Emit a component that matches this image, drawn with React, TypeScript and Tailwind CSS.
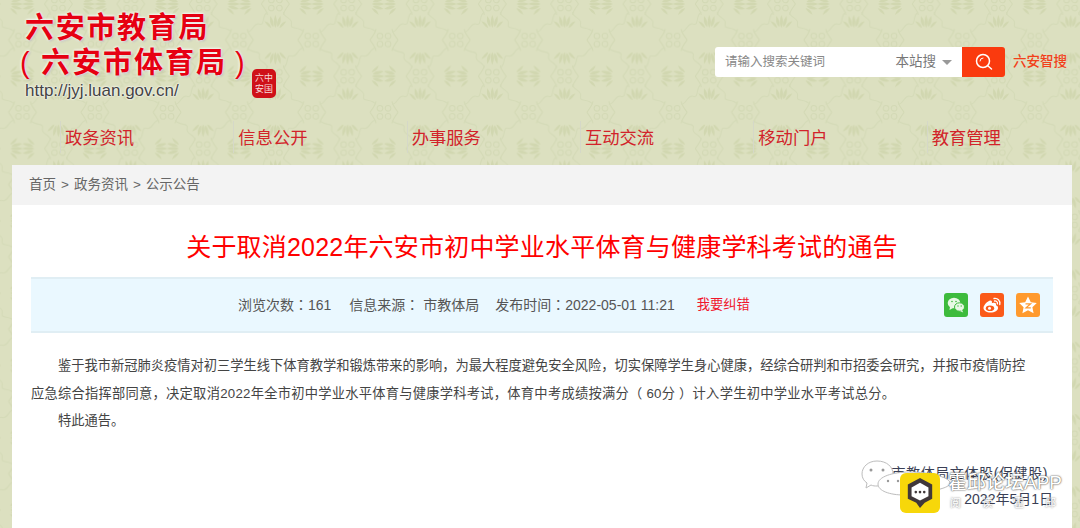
import React from "react";

const navItems = ["政务资讯", "信息公开", "办事服务", "互动交流", "移动门户", "教育管理"];
const cjk = "font-['Liberation_Sans','Noto_Sans_CJK_SC',sans-serif]";

const PagePattern = () => (
  <svg className="absolute inset-0 h-full w-full" aria-hidden="true">
    <defs>
      <g id="fleur" fill="#d1d7b0">
        <path d="M0 0C-2.5-5-1.5-9 0-13C1.5-9 2.5-5 0 0Z" />
        <path d="M-2-1C-5-3-6-7-5-12C-3-9-1-6-2-1ZM2-1C5-3 6-7 5-12C3-9 1-6 2-1Z" />
        <path d="M-4 0C-7-1-9-4-11-7C-7-6-5-4-4 0ZM4 0C7-1 9-4 11-7C7-6 5-4 4 0Z" />
      </g>
      <g id="knot" fill="none" stroke="#d3d9b5" strokeWidth="1.1">
        <circle cx="-4" cy="-4" r="2.8" />
        <circle cx="4" cy="-4" r="2.8" />
        <circle cx="-4" cy="4" r="2.8" />
        <circle cx="4" cy="4" r="2.8" />
        <path d="M-14 0C-11-4-8-8-8-11M14 0C11-4 8-8 8-11M-14 0C-11 4-8 8-8 11M14 0C11 4 8 8 8 11" />
      </g>
      <path id="scroll" d="M8 28C14 28 14 18 20 20C26 22 22 12 28 8" fill="none" stroke="#d4dab7" strokeWidth="1.1" />
      <pattern id="damask" width="72.3" height="72.3" patternUnits="userSpaceOnUse" patternTransform="translate(22.5 4)">
        <use href="#fleur" transform="translate(36 24)" />
        <use href="#fleur" transform="translate(36 48) rotate(180)" />
        <use href="#fleur" transform="translate(12 0) rotate(-90)" />
        <use href="#fleur" transform="translate(60 0) rotate(90)" />
        <use href="#fleur" transform="translate(12 72.3) rotate(-90)" />
        <use href="#fleur" transform="translate(60 72.3) rotate(90)" />
        <use href="#knot" transform="translate(0 36)" />
        <use href="#knot" transform="translate(72.3 36)" />
        <use href="#knot" transform="translate(36 0)" />
        <use href="#knot" transform="translate(36 72.3)" />
        <use href="#scroll" />
        <use href="#scroll" transform="rotate(90 36 36)" />
        <use href="#scroll" transform="rotate(180 36 36)" />
        <use href="#scroll" transform="rotate(270 36 36)" />
      </pattern>
    </defs>
    <rect width="100%" height="100%" fill="url(#damask)" />
  </svg>
);

const Logo = () => (
  <div className="relative h-[112px] w-[300px] pl-[25px] pt-[11px]">
    <div className="text-[29px] leading-[35px] font-bold tracking-[1.7px] text-[#e60012] [text-shadow:0_0_3px_#fff,0_0_3px_#fff,1px_1px_2px_#999]">六安市教育局</div>
    <div className="-ml-[5px] flex whitespace-nowrap text-[29px] leading-[34px] font-bold tracking-[2px] text-[#e60012] [text-shadow:0_0_3px_#fff,0_0_3px_#fff,1px_1px_2px_#999]">
      <span className="w-[21px] font-normal">(</span>
      <span>六安市体育局</span>
      <span className="ml-[8px] font-normal">)</span>
    </div>
    <div className="text-[17px] leading-[21px] text-[#444] [text-shadow:0_0_2px_#fff,0_0_2px_#fff]">http://jyj.luan.gov.cn/</div>
    <div className="absolute left-[252px] top-[69px] flex h-[29px] w-[24px] items-center justify-center rounded-[5px] bg-[#cf1018] text-[9px] leading-[11px] text-[#f7d9d9]">
      <span className="w-[18px] text-center">六中<br />安国</span>
    </div>
  </div>
);

const SearchBar = () => (
  <div className="flex items-start pt-[47px]">
    <div className="flex h-[30px] w-[247px] items-center justify-between rounded-l-[3px] bg-white pl-[10px] pr-[10px] text-[12.5px] text-[#888]">
      <span>请输入搜索关键词</span>
      <span className="flex items-center gap-[6px] text-[13.5px] text-[#777]">
        本站搜
        <span className="mt-[1px] h-0 w-0 border-x-[5.5px] border-t-[5px] border-x-transparent border-t-[#999]" />
      </span>
    </div>
    <div className="flex h-[30px] w-[43px] items-center justify-center rounded-r-[3px] bg-[#fa3a0e]">
      <svg width="18" height="18" viewBox="0 0 18 18" fill="none" stroke="#fff" strokeWidth="1.5" strokeLinecap="round">
        <circle cx="8" cy="8" r="6.5" />
        <path d="M5 8a3 3 0 0 1 3-3" strokeWidth="1" />
        <path d="M13 13l3.5 3" />
      </svg>
    </div>
    <span className="ml-[8px] mt-[7px] text-[13.5px] leading-[16px] font-medium text-[#f2401a]">六安智搜</span>
  </div>
);

const WechatIcon = () => (
  <svg viewBox="0 0 24 24" className="h-[24px] w-[24px]">
    <rect width="24" height="24" rx="3" fill="#3dbb3d" />
    <ellipse cx="10" cy="10" rx="6.3" ry="5.3" fill="#e8f8e4" />
    <path d="M6 13.5L5.5 17L9 15Z" fill="#e8f8e4" />
    <ellipse cx="15.5" cy="14" rx="5" ry="4.2" fill="#e8f8e4" stroke="#3dbb3d" strokeWidth="1" />
    <path d="M18 17l1.2 2.5L16 18Z" fill="#e8f8e4" />
    <circle cx="8" cy="8.5" r=".8" fill="#3dbb3d" />
    <circle cx="12" cy="8.5" r=".8" fill="#3dbb3d" />
    <circle cx="14" cy="13" r=".7" fill="#3dbb3d" />
    <circle cx="17.2" cy="13" r=".7" fill="#3dbb3d" />
  </svg>
);

const WeiboIcon = () => (
  <svg viewBox="0 0 24 24" className="h-[24px] w-[24px]">
    <rect width="24" height="24" rx="3" fill="#fb5a19" />
    <path d="M10.5 19.5C6.5 19.5 3.5 17.6 3.5 15C3.5 12 7.5 8 10.5 7.5C12 7.4 12.3 9 11.8 10.3C14.5 9.3 16.5 9.8 16 12.3C17.5 12.8 18 13.8 18 15C18 17.5 14.8 19.5 10.5 19.5Z" fill="#fff" />
    <ellipse cx="10" cy="15.2" rx="4.2" ry="2.8" fill="#fb5a19" />
    <circle cx="9.5" cy="15.2" r="1.5" fill="#fff" />
    <path d="M14 5.5C17.5 4.8 20.5 7.5 19.8 11.5M14.5 8C16.3 7.7 17.8 9 17.4 10.8" fill="none" stroke="#fff" strokeWidth="1.3" strokeLinecap="round" />
  </svg>
);

const QzoneIcon = () => (
  <svg viewBox="0 0 24 24" className="h-[24px] w-[24px]">
    <rect width="24" height="24" rx="3" fill="#ff9a2e" />
    <path d="M12 3.5L14.8 9.2L20.8 10L16.4 14.2L17.6 20.3L12 17.3L6.4 20.3L7.6 14.2L3.2 10L9.2 9.2Z" fill="#fff" />
    <path d="M9.5 10.8H14.6L10 14.8H14.8" fill="none" stroke="#ff9a2e" strokeWidth="1.2" />
  </svg>
);

// centred full-width colon, the SC face sets it low on the left
const Colon = () => <span className="font-['Noto_Sans_CJK_TC',sans-serif]">：</span>;

// the WeChat article watermark sitting over the bottom right corner
const Watermark = () => (
  <>
    <svg className="absolute left-[860px] top-[458px] h-[48px] w-[92px]" viewBox="0 0 92 48" fill="#fff" stroke="#bdbdbd" strokeWidth="1">
      <path d="M17 3C8 3 2 9 2 16C2 20 4 23 7 25L6 30L11 27C13 28 15 28 17 28C27 28 33 22 33 16C33 9 27 3 17 3Z" />
      <path d="M50 14C32 14 18 19 18 26C18 33 30 37 44 37C48 37 50 37 52 36L58 40L57 35C74 33 90 30 90 25C90 19 68 14 50 14Z" />
      <circle cx="11" cy="12" r="1.5" fill="#999" stroke="none" />
      <circle cx="23" cy="12" r="1.5" fill="#999" stroke="none" />
      <circle cx="28" cy="23" r="1.2" fill="#999" stroke="none" />
      <circle cx="38" cy="23" r="1.2" fill="#999" stroke="none" />
    </svg>
    <div className="absolute left-[900px] top-[473px] flex h-[40px] w-[40px] items-center justify-center rounded-[6px] bg-[#f7d70a]">
      <svg viewBox="0 0 32 36" className="h-[34px] w-[30px]">
        <path d="M16 2L29 9V24L21 28.5L16 34L12 28.5L3 24V9Z" fill="#40383a" />
        <path d="M16 7L25 12V21.5L16 26L7 21.5V12Z" fill="#fff" />
        <circle cx="11.5" cy="17" r="1.4" fill="#40383a" />
        <circle cx="16" cy="17" r="1.4" fill="#40383a" />
        <circle cx="20.5" cy="17" r="1.4" fill="#40383a" />
      </svg>
    </div>
  </>
);

export default function App() {
  return (
    <div className={`relative h-[528px] w-[1080px] overflow-hidden bg-[#dce0c0] ${cjk}`}>
      <PagePattern />
      <div className="relative flex h-[112px] justify-between pr-[13px]">
        <Logo />
        <SearchBar />
      </div>
      <nav className="relative ml-[60px] grid h-[53px] w-[1040px] grid-cols-6 pt-[9px] pb-[12px]">
        {navItems.map((item) => (
          <div key={item} className="flex h-[32px] items-center border-l border-[#d5d8c8] pl-[4px] pt-[3px] text-[17.3px] text-[#d2232a]">
            {item}
          </div>
        ))}
      </nav>
      <main className="relative mx-[12px] h-[363px] w-[1060px] bg-white">
        <div className="flex h-[40px] items-center gap-[5px] bg-[#f3f3f3] pl-[17px] pt-[1px] text-[13.5px] text-[#666]">
          <span>首页</span><span>&gt;</span><span>政务资讯</span><span>&gt;</span><span>公示公告</span>
        </div>
        <div className="px-[19px]">
          <h1 className="pb-[14px] pt-[26px] text-center text-[25px] leading-[32px] font-normal tracking-[0.2px] text-[#f00]">
            关于取消2022年六安市初中学业水平体育与健康学科考试的通告
          </h1>
          <div className="relative flex h-[56px] items-center border-y-2 border-[#e0eef4] bg-[#eaf8ff] pl-[207px] text-[14px] text-[#555]">
            <span>浏览次数<Colon />161</span>
            <span className="ml-[18px]">信息来源<Colon /> 市教体局</span>
            <span className="ml-[16px]">发布时间<Colon />2022-05-01 11:21</span>
            <span className="ml-[22px] text-[13.25px] text-[#f0172c]">我要纠错</span>
            <div className="absolute right-[13px] top-[14px] flex gap-[12px]">
              <WechatIcon />
              <WeiboIcon />
              <QzoneIcon />
            </div>
          </div>
          <div className="pr-[20px] pt-[19px] text-[13.25px] leading-[27.5px] text-[#444]">
            <p className="indent-[27px]">
              鉴于我市新冠肺炎疫情对初三学生线下体育教学和锻炼带来的影响，为最大程度避免安全风险，切实保障学生身心健康，经综合研判和市招委会研究，并报市疫情防控
              <span className="tracking-[0.26px]">应急综合指挥部同意，决定取消2022年全市初中学业水平体育与健康学科考试，体育中考成绩按满分（ 60分 ）计入学生初中学业水平考试总分。</span>
            </p>
            <p className="indent-[27px]">特此通告。</p>
          </div>
        </div>
        <div className="absolute right-[24px] top-[297px] whitespace-nowrap text-right text-[14px] leading-[22px] tracking-[0.6px] text-[#3a3f55]">
          市教体局文体股(保健股)
        </div>
        <div className="absolute right-[19px] top-[323px] whitespace-nowrap text-right text-[14px] leading-[22px] text-[#3a3f55]">
          2022年5月1日
        </div>
      </main>
      <Watermark />
      <div className="absolute left-[948px] top-[471px] whitespace-nowrap text-[19px] leading-[24px] font-medium text-white [text-shadow:0_0_2px_rgba(0,0,0,.7),0_0_1px_rgba(0,0,0,.5)]">霍邱论坛APP</div>
      <div className="absolute left-[950px] top-[496px] flex w-[106px] justify-between text-[11px] leading-[14px] text-white [text-shadow:0_0_2px_rgba(0,0,0,.6)]">
        <span>阅</span><span>读</span><span>霍</span><span>邱</span>
      </div>
    </div>
  );
}
